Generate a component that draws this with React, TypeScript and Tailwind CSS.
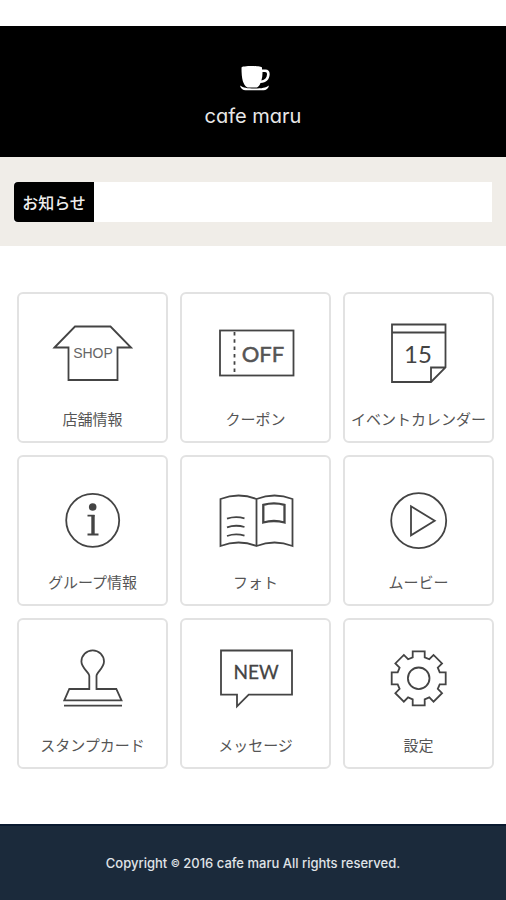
import type { ReactNode } from "react";

function gearPath(cx: number, cy: number): string {
  const corners = [
    [-6, -21],
    [-6, -27],
    [6, -27],
    [6, -21],
  ];
  const points: string[] = [];
  for (let tooth = 0; tooth < 8; tooth++) {
    const angle = (tooth * Math.PI) / 4;
    for (const [x, y] of corners) {
      const px = cx + x * Math.cos(angle) - y * Math.sin(angle);
      const py = cy + x * Math.sin(angle) + y * Math.cos(angle);
      points.push(`${px.toFixed(2)} ${py.toFixed(2)}`);
    }
  }
  return `M${points.join("L")}Z`;
}

type IconTextProps = { x: number; y: number; className: string; children: string };

function IconText({ x, y, className, children }: IconTextProps) {
  return (
    <text x={x} y={y} textAnchor="middle" stroke="none" className={className}>
      {children}
    </text>
  );
}

const menu: { label: string; icon: ReactNode }[] = [
  {
    label: "店舗情報",
    icon: (
      <>
        <path d="M2.5 31.5L23 10.5H58.5L79 31.5H65.5V64H16.5V31.5Z" />
        <IconText x={41} y={42} className="fill-[#666] font-['Liberation_Sans',sans-serif] text-[14px]">
          SHOP
        </IconText>
      </>
    ),
  },
  {
    label: "クーポン",
    icon: (
      <>
        <rect x="5" y="14.5" width="73.5" height="45" />
        <path d="M19.5 16V59" strokeDasharray="3.5 3.8" />
        <IconText x={48} y={46} className="fill-[#555] stroke-[#555] stroke-[0.5] font-[Lato,sans-serif] text-[22px]">
          OFF
        </IconText>
      </>
    ),
  },
  {
    label: "イベントカレンダー",
    icon: (
      <>
        <path d="M14 8.5H67.5V51.5L53 66H14ZM14 16.5H67.5M53 66V51.5H67.5" />
        <IconText x={40} y={47} className="fill-[#444] font-[Lato,sans-serif] text-[24px]">
          15
        </IconText>
      </>
    ),
  },
  {
    label: "グループ情報",
    icon: (
      <>
        <circle cx="40.7" cy="41.3" r="26.5" />
        <circle cx="40.7" cy="28" r="3.8" fill="currentColor" stroke="none" />
        <path d="M35.5 36.7H42.5M35.5 55.5H46.5" />
        <path d="M41 36V56" strokeWidth="3.4" />
      </>
    ),
  },
  {
    label: "フォト",
    icon: (
      <>
        <path d="M5.5 20Q23.5 13 41.5 20Q59.5 13 77.5 20V67Q59.5 60 41.5 67Q23.5 60 5.5 67ZM41.5 20V67" />
        <path d="M12 39.7Q20.7 36.8 29.5 39.4M12 48.3Q20.7 45.4 29.5 48M12 57Q20.7 54.1 29.5 56.7" />
        <path d="M48.3 25.8Q59 22.8 69.5 25.8V43.5Q59 40.5 48.3 43.5Z" strokeWidth="2.3" />
      </>
    ),
  },
  {
    label: "ムービー",
    icon: (
      <>
        <circle cx="40.7" cy="41.7" r="27.5" />
        <path d="M33 27.3L56.7 41.7L33 56.3Z" />
      </>
    ),
  },
  {
    label: "スタンプカード",
    icon: (
      <>
        <path d="M37.3 47V34C37.3 30.5 29.4 26 29.4 19.6A11.3 11.3 0 0 1 52 19.6C52 26 44.5 30.5 44.5 34V47H64.3L69.5 58.4H12.3L17.3 47Z" />
        <path d="M12 63.6H70" />
      </>
    ),
  },
  {
    label: "メッセージ",
    icon: (
      <>
        <path d="M6 8.5H77V52.7H33.7L22 64.3V52.7H6Z" />
        <IconText x={41} y={37} className="fill-[#444] stroke-[#444] stroke-[0.3] font-[Lato,sans-serif] text-[19px]">
          NEW
        </IconText>
      </>
    ),
  },
  {
    label: "設定",
    icon: (
      <>
        <path d={gearPath(40.7, 36.3)} />
        <circle cx="40.7" cy="36.3" r="10.8" />
      </>
    ),
  },
];

function CupLogo() {
  return (
    <svg viewBox="-4 0 34 25" className="h-[25px] w-[34px]" fill="white" aria-hidden="true">
      <path d="M1.500 1.500C1.500.5 7 0 11.500 0S22 .5 22 1.500V3.500H25.500C28.500 3.500 30 5.500 29.600 9C29.200 13.500 26.500 16.500 20.500 17C19.800 19 18.500 20.600 17 21.500H7.500C3 19 1.500 13 1.500 1.500ZM22.500 6C22.600 9 22.200 12 21.400 14.600C25 14 26.800 11.800 27 8.600C27.100 6.800 26.400 6 25 6Z" fillRule="evenodd" />
      <path d="M0 19.500C3.500 21.800 7 22.500 14.500 22.500S25.500 21.800 29 19.500C28.500 22.500 26 24.300 23.500 24.300H5.500C3 24.300.5 22.500 0 19.500Z" />
    </svg>
  );
}

export default function App() {
  return (
    <div className="flex min-h-screen flex-col bg-white pt-[26px] font-['Noto_Sans_CJK_JP',sans-serif]">
      <header className="flex flex-col items-center bg-black pt-10 pb-7">
        <CupLogo />
        <h1 className="mt-3 font-[Inter,sans-serif] text-xl leading-[26px] font-normal text-[#e8e8e8] [font-feature-settings:'cv11']">
          cafe maru
        </h1>
      </header>

      <section className="bg-[#f0ede8] px-3.5 pt-[25px] pb-6">
        <div className="flex h-10 bg-white">
          <h2 className="flex w-20 items-center justify-center rounded-l-sm bg-black text-base font-medium text-[#eee]">
            お知らせ
          </h2>
        </div>
      </section>

      <nav className="grid grid-cols-3 gap-3 pt-[46px] pr-3 pb-[55px] pl-[17px]">
        {menu.map(({ label, icon }) => (
          <a
            key={label}
            href="#"
            className="flex flex-col items-center rounded-md border-2 border-[#e2e2e2] pt-[22px] pb-2.5 text-[#444]"
          >
            <svg
              viewBox="0 0 81 72"
              className="h-[72px] w-[81px]"
              fill="none"
              stroke="currentColor"
              strokeWidth="1.8"
              aria-hidden="true"
            >
              {icon}
            </svg>
            <span className="mt-[19px] text-[15px] leading-6 font-normal whitespace-nowrap text-[#555]">{label}</span>
          </a>
        ))}
      </nav>

      <footer className="flex grow items-center justify-center border-t-2 border-[#0a1a30] bg-[#1b2a3b] py-6">
        <p className="font-[Inter,sans-serif] text-[13px] leading-6 font-medium text-[#e0e4e8]">
          Copyright <small className="align-[1px] text-[10px]">©</small> 2016 cafe maru All rights reserved.
        </p>
      </footer>
    </div>
  );
}
